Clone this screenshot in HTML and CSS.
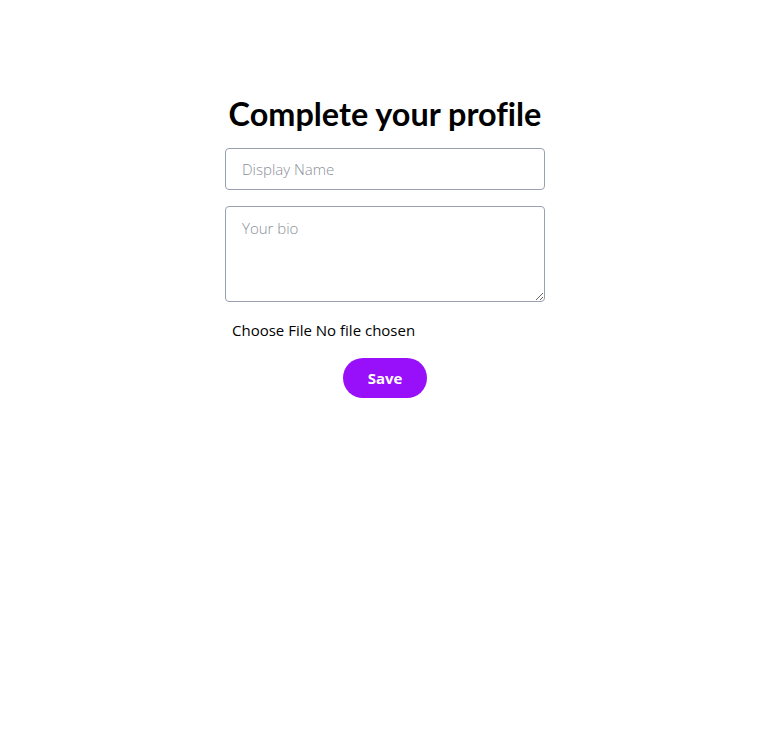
FILE: index.html
```html
<!DOCTYPE html>
<html lang="en">
<head>
<meta charset="utf-8">
<link rel="stylesheet" href="styles.css">
</head>
<body>
<main class="page">
  <form class="card">
    <h1 class="title">Complete your profile</h1>
    <input class="field" type="text" placeholder="Display Name">
    <textarea class="field area" placeholder="Your bio"></textarea>
    <div class="file"><span>Choose File</span> <span>No file chosen</span></div>
    <button class="save" type="button">Save</button>
  </form>
</main>
</body>
</html>
```
FILE: styles.css
```css
* { box-sizing: border-box; }
html, body { margin: 0; padding: 0; background: #fff; }
body { font-family: "Open Sans", "Noto Sans", sans-serif; color: #000; }
.page { display: flex; justify-content: center; padding: 100px 0 0 3px; }
.card { width: 320px; display: flex; flex-direction: column; gap: 16px; }
.title { margin: -4px 0 0; font-family: Lato, "Open Sans", sans-serif; font-size: 32.4px; font-weight: 700; text-align: center; line-height: 36px; height: 36px; white-space: nowrap; font-variant-ligatures: none; }
.field { width: 100%; height: 42px; border: 1px solid #99a1af; border-radius: 4px; padding: 8px 16px; font: inherit; font-size: 15px; font-weight: 300; color: #000; background: #fff; outline: none; }
.field::placeholder { color: #8a8f98; }
.area { height: 96px; padding-top: 11px; resize: vertical; display: block; }
.file { font-size: 15px; font-weight: 400; padding-left: 7px; line-height: 20px; margin-top: 2px; }
.save { align-self: center; width: 84px; height: 40px; border: none; border-radius: 999px; background: #9810fa; color: #fff; font: inherit; font-size: 15px; font-weight: 700; cursor: pointer; margin-top: 2px; }
```
